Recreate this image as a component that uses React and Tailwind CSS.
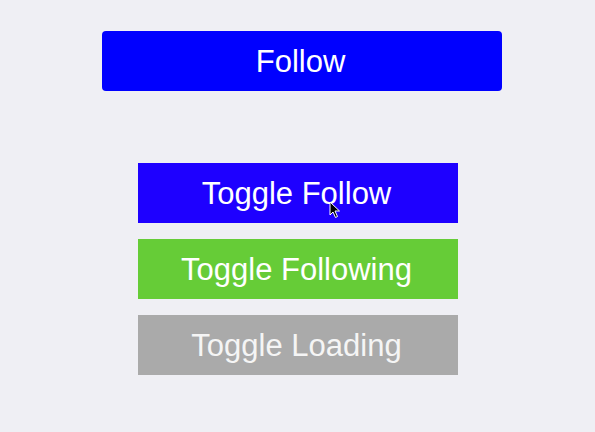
export default function App() {
  const font = { fontFamily: '"Liberation Sans", Arial, sans-serif' };
  return (
    <div className="w-[595px] h-[432px] bg-[#efeff4] overflow-hidden" style={font}>
      <div className="pt-[31px] pl-[102px]">
        <button className="w-[400px] h-[60px] rounded-[4px] bg-[#0000ff] text-white text-[31px] pr-[3px] pt-[3px] flex items-center justify-center">
          Follow
        </button>
      </div>
      <div className="mt-[72px] pl-[138px] flex flex-col gap-4">
        <button className="relative w-[320px] h-[60px] bg-[#1e00ff] text-white text-[31px] pr-[3px] pt-[3px] flex items-center justify-center">
          Toggle Follow
          <svg className="absolute left-[191px] top-[38px]" width="12" height="18" viewBox="0 0 12 18">
            <path d="M1 1 L1 14 L4 11 L6.5 16.5 L8.5 15.5 L6 10 L10.5 10 Z" fill="#000" stroke="#fff" strokeWidth="1" strokeLinejoin="round" />
          </svg>
        </button>
        <button className="w-[320px] h-[60px] bg-[#66cc37] text-white text-[31px] pr-[3px] pt-[3px] flex items-center justify-center">
          Toggle Following
        </button>
        <button className="w-[320px] h-[60px] bg-[#aaaaaa] text-[#f5f5f5] text-[31px] pr-[3px] pt-[3px] flex items-center justify-center">
          Toggle Loading
        </button>
      </div>
    </div>
  );
}
